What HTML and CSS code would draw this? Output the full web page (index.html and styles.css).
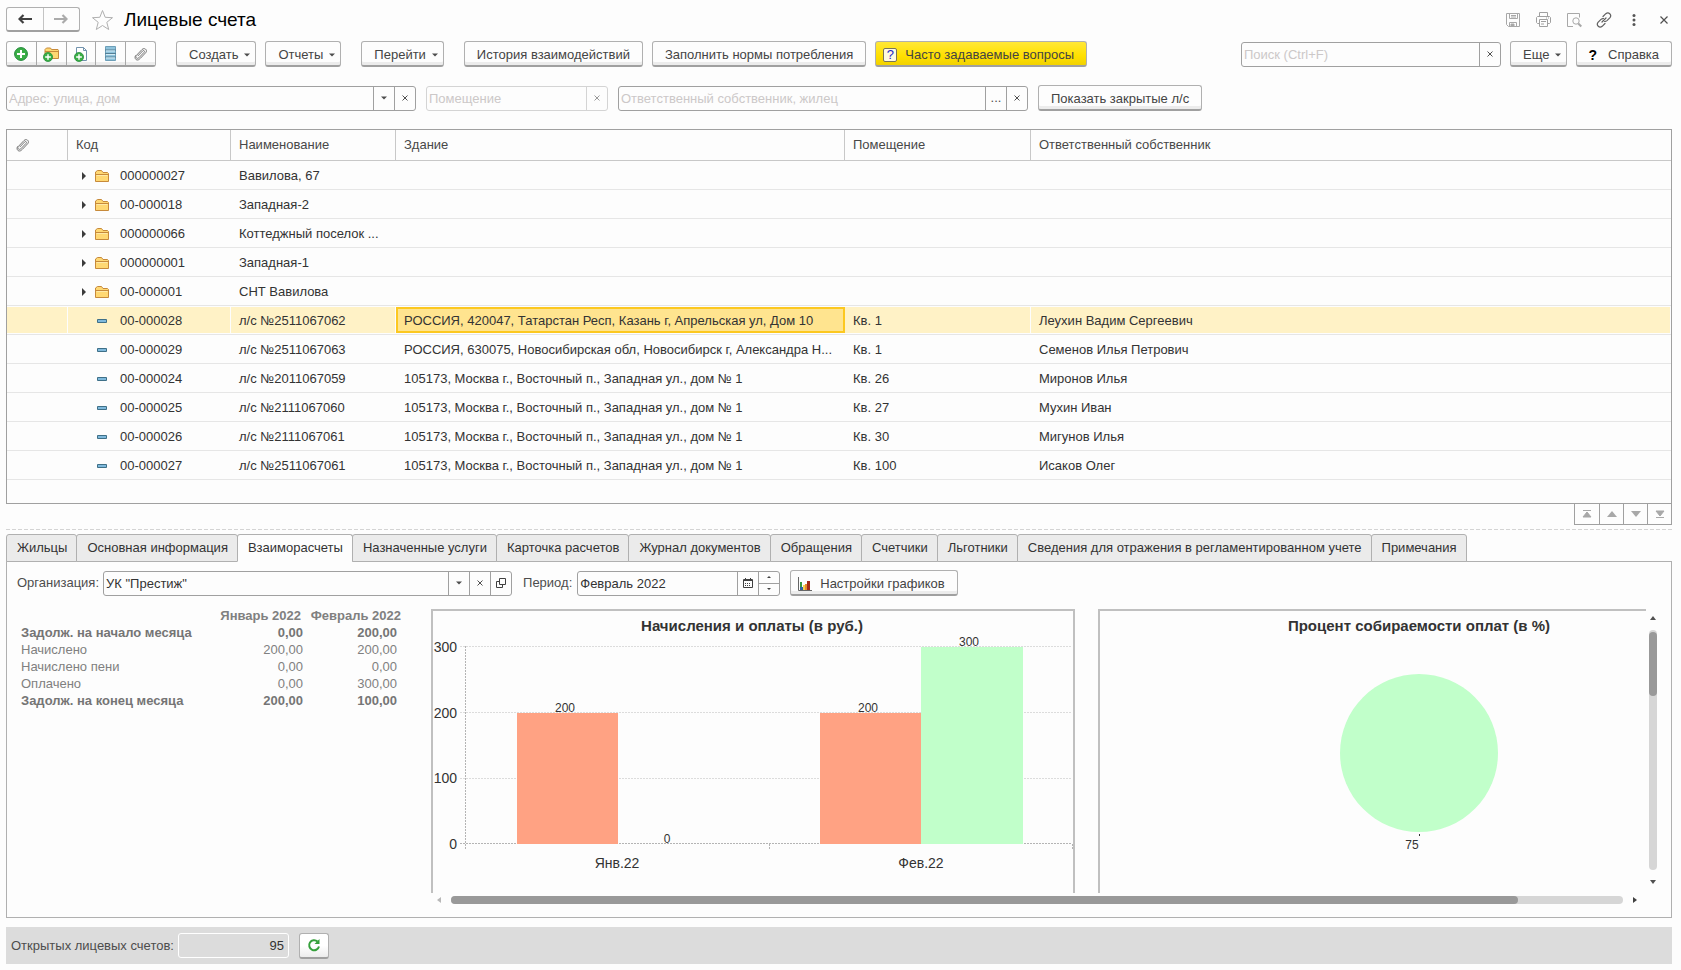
FILE: index.html
```html
<!DOCTYPE html>
<html lang="ru">
<head>
<meta charset="utf-8">
<title>Лицевые счета</title>
<link rel="stylesheet" href="styles.css">
</head>
<body>
<svg class="defs" aria-hidden="true">
  <symbol id="i-folder" viewBox="0 0 16 14"><path d="M1.5 12.5v-9.500l2-1.500h4l1.500 2h4.500l1 1v8z" fill="#ffd873" stroke="#c78a3b"/><path d="M1.500 5.500h13" stroke="#c78a3b"/><path d="M2.500 6.500h11" stroke="#ffeaa8"/></symbol>
  <symbol id="i-item" viewBox="0 0 10 4"><path d="M.5.5h9v3h-9z" fill="#7fb9dc" stroke="#3f7088"/></symbol>
  <symbol id="i-open" viewBox="0 0 4 8"><path d="M0 0v8l4-4z" fill="#3c3c3c"/></symbol>
  <symbol id="i-down" viewBox="0 0 6 4"><path d="M0 .5h6L3 3.500z" fill="#4d4d4d"/></symbol>
  <symbol id="i-x" viewBox="0 0 6 6"><path d="M.5.5l5 5M5.500.5l-5 5" stroke="currentColor"/></symbol>
  <symbol id="i-clip" viewBox="0 0 14 14"><path d="M4 8.800l4.700-4.900c1-1 2.400.2 1.500 1.300l-5.400 5.600c-1.700 1.600-4-.6-2.500-2.300L8 2.500c2.500-2.400 6 .6 3.700 3.200l-5.200 5.500-1.800 1.500c-2.600 1.300-4.800-1.600-3.200-4" fill="none" stroke="#747474" stroke-linecap="round"/></symbol>
  <symbol id="i-plus" viewBox="0 0 14 14"><circle cx="7" cy="7" r="6.400" fill="#3aae46" stroke="#22883a"/><path d="M7 3v8M3 7h8" stroke="#fff" stroke-width="2"/></symbol>
</svg>

<header class="titlebar">
  <div class="group nav">
    <button class="cell" aria-label="Назад"><svg width="14" height="10" viewBox="0 0 14 10"><path d="M14 5H3M5.500 1L1.500 5l4 4" fill="none" stroke="#404040" stroke-width="2.200"/></svg></button>
    <button class="cell" aria-label="Вперед"><svg width="14" height="10" viewBox="0 0 14 10"><path d="M0 5h11M8.500 1l4 4-4 4" fill="none" stroke="#ababab" stroke-width="2.200"/></svg></button>
  </div>
  <button class="plain" aria-label="Избранное"><svg width="23" height="22" viewBox="0 0 23 22"><path d="M11.500 1.500l2.700 6.800 7.300.4-5.700 4.600 1.900 7.200-6.200-4-6.200 4 1.900-7.200L1.500 8.700l7.300-.4z" fill="none" stroke="#b0b0b0"/></svg></button>
  <h1 class="title">Лицевые счета</h1>
  <div class="wintools">
    <button class="plain" aria-label="Сохранить"><svg width="16" height="16" viewBox="0 0 16 16" fill="none" stroke="#a8a8a8"><path d="M1.500 1.500h13v13h-11l-2-2zM4.500 1.500v5h8v-5M6 3.500h5M6 5h5M4.500 14.500v-4h7v4"/><path d="M6 12h3v2H6z" fill="#a8a8a8"/></svg></button>
    <button class="plain" aria-label="Печать"><svg width="17" height="16" viewBox="0 0 17 16" fill="none" stroke="#a0a0a0"><path d="M4.500 4.500v-4h8v4M4.500 11.500h-2l-1-1v-5l1-1h12l1 1v5l-1 1h-2M4.500 7.500h8v7h-8zM6 9.500h5M6 12h3M11 6h1m1 0h1"/></svg></button>
    <button class="plain" aria-label="Просмотр"><svg width="16" height="16" viewBox="0 0 16 16" fill="none" stroke="#a8a8a8"><path d="M7 14.500H1.500v-13h12v4"/><circle cx="10" cy="9" r="3.200"/><path d="M12.300 11.500l3 3" stroke-width="2"/></svg></button>
    <button class="plain" aria-label="Ссылка"><svg width="16" height="16" viewBox="0 0 16 16" fill="none" stroke="#606060" stroke-width="1.200" stroke-linecap="round"><path d="M7 4.500l2.800-2.800c2.800-2.300 6.300 1 4.200 3.900l-3 3c-.9.700-1.600.9-2.500.7M9 11.500l-2.800 2.800c-2.800 2.300-6.300-1-4.200-3.900l3-3c.9-.7 1.600-.9 2.500-.7M6 10l1.500-1.500M8.500 7.500L10 6"/></svg></button>
    <button class="plain" aria-label="Меню"><svg width="16" height="16" viewBox="0 0 16 16" fill="#555"><circle cx="8" cy="3.500" r="1.500"/><circle cx="8" cy="8" r="1.500"/><circle cx="8" cy="12.500" r="1.500"/></svg></button>
    <button class="plain" aria-label="Закрыть"><svg width="16" height="16" viewBox="0 0 16 16"><path d="M4.500 4.500l7 7M11.500 4.500l-7 7" stroke="#505050" stroke-width="1.200"/></svg></button>
  </div>
</header>

<div class="toolbar">
  <div class="group tools">
    <button class="cell" aria-label="Добавить"><svg width="14" height="14"><use href="#i-plus"/></svg></button>
    <button class="cell" aria-label="Создать группу"><svg width="16" height="16" viewBox="0 0 16 16"><path d="M2 12V3.500L3.500 2h4l1 1.500H15l.5 1v8H2z" fill="#ffd873" stroke="#c78a3b"/><path d="M2 5.500h13" stroke="#c78a3b"/><svg y="6" width="10" height="10"><use href="#i-plus"/></svg></svg></button>
    <button class="cell" aria-label="Скопировать"><svg width="14" height="16" viewBox="0 0 14 16"><path d="M2.500 1.500h7l3 3v10h-10z" fill="#fff" stroke="#7393ad"/><path d="M9.500 1.500v3h3" fill="none" stroke="#7393ad"/><svg y="6" width="10" height="10"><use href="#i-plus"/></svg></svg></button>
    <button class="cell" aria-label="Список"><svg width="11" height="15" viewBox="0 0 11 15"><path d="M.5.5h10v14H.5z" fill="#8fc3dc" stroke="#6d9fb8"/><path d="M0 4h11M0 7.500h11M0 11h11" stroke="#557f95"/><path d="M1 5h9M1 8.500h9M1 12h9" stroke="#d4ecf5"/></svg></button>
    <button class="cell" aria-label="Файлы"><svg width="14" height="14"><use href="#i-clip"/></svg></button>
  </div>
  <button class="btn drop gap-l">Создать<svg width="6" height="4"><use href="#i-down"/></svg></button>
  <button class="btn drop">Отчеты<svg width="6" height="4"><use href="#i-down"/></svg></button>
  <button class="btn drop gap-l">Перейти<svg width="6" height="4"><use href="#i-down"/></svg></button>
  <button class="btn gap-l">История взаимодействий</button>
  <button class="btn">Заполнить нормы потребления</button>
  <button class="btn faq"><span class="q">?</span>Часто задаваемые вопросы</button>
  <div class="field search">
    <input type="text" placeholder="Поиск (Ctrl+F)" aria-label="Поиск">
    <button aria-label="Очистить"><svg width="6" height="6"><use href="#i-x"/></svg></button>
  </div>
  <button class="btn drop">Еще<svg width="6" height="4"><use href="#i-down"/></svg></button>
  <button class="btn help"><b>?</b>Справка</button>
</div>

<div class="filters">
  <div class="field wide">
    <input type="text" placeholder="Адрес: улица, дом" aria-label="Адрес">
    <button aria-label="Выбрать"><svg width="6" height="4"><use href="#i-down"/></svg></button>
    <button aria-label="Очистить"><svg width="6" height="6"><use href="#i-x"/></svg></button>
  </div>
  <div class="field room">
    <input type="text" placeholder="Помещение" aria-label="Помещение">
    <button aria-label="Очистить"><svg width="6" height="6"><use href="#i-x"/></svg></button>
  </div>
  <div class="field wide">
    <input type="text" placeholder="Ответственный собственник, жилец" aria-label="Ответственный собственник, жилец">
    <button>...</button>
    <button aria-label="Очистить"><svg width="6" height="6"><use href="#i-x"/></svg></button>
  </div>
  <button class="btn">Показать закрытые л/с</button>
</div>

<div class="grid-frame">
<table class="grid">
  <colgroup><col class="c-clip"><col class="c-code"><col class="c-name"><col class="c-house"><col class="c-room"><col></colgroup>
  <thead><tr><th class="clip" aria-label="Файлы"><svg width="14" height="14"><use href="#i-clip"/></svg></th><th>Код</th><th>Наименование</th><th>Здание</th><th>Помещение</th><th>Ответственный собственник</th></tr></thead>
  <tbody>
    <tr><td></td><td><span class="code"><svg class="open"><use href="#i-open"/></svg><svg class="folder"><use href="#i-folder"/></svg>000000027</span></td><td>Вавилова, 67</td><td></td><td></td><td></td></tr>
    <tr><td></td><td><span class="code"><svg class="open"><use href="#i-open"/></svg><svg class="folder"><use href="#i-folder"/></svg>00-000018</span></td><td>Западная-2</td><td></td><td></td><td></td></tr>
    <tr><td></td><td><span class="code"><svg class="open"><use href="#i-open"/></svg><svg class="folder"><use href="#i-folder"/></svg>000000066</span></td><td>Коттеджный поселок ...</td><td></td><td></td><td></td></tr>
    <tr><td></td><td><span class="code"><svg class="open"><use href="#i-open"/></svg><svg class="folder"><use href="#i-folder"/></svg>000000001</span></td><td>Западная-1</td><td></td><td></td><td></td></tr>
    <tr><td></td><td><span class="code"><svg class="open"><use href="#i-open"/></svg><svg class="folder"><use href="#i-folder"/></svg>00-000001</span></td><td>СНТ Вавилова</td><td></td><td></td><td></td></tr>
    <tr class="selected"><td></td><td><span class="code leaf"><svg class="item"><use href="#i-item"/></svg>00-000028</span></td><td>л/с №2511067062</td><td class="current">РОССИЯ, 420047, Татарстан Респ, Казань г, Апрельская ул, Дом 10</td><td>Кв. 1</td><td>Леухин Вадим Сергеевич</td></tr>
    <tr><td></td><td><span class="code leaf"><svg class="item"><use href="#i-item"/></svg>00-000029</span></td><td>л/с №2511067063</td><td>РОССИЯ, 630075, Новосибирская обл, Новосибирск г, Александра Н...</td><td>Кв. 1</td><td>Семенов Илья Петрович</td></tr>
    <tr><td></td><td><span class="code leaf"><svg class="item"><use href="#i-item"/></svg>00-000024</span></td><td>л/с №2011067059</td><td>105173, Москва г., Восточный п., Западная ул., дом № 1</td><td>Кв. 26</td><td>Миронов Илья</td></tr>
    <tr><td></td><td><span class="code leaf"><svg class="item"><use href="#i-item"/></svg>00-000025</span></td><td>л/с №2111067060</td><td>105173, Москва г., Восточный п., Западная ул., дом № 1</td><td>Кв. 27</td><td>Мухин Иван</td></tr>
    <tr><td></td><td><span class="code leaf"><svg class="item"><use href="#i-item"/></svg>00-000026</span></td><td>л/с №2111067061</td><td>105173, Москва г., Восточный п., Западная ул., дом № 1</td><td>Кв. 30</td><td>Мигунов Илья</td></tr>
    <tr><td></td><td><span class="code leaf"><svg class="item"><use href="#i-item"/></svg>00-000027</span></td><td>л/с №2511067061</td><td>105173, Москва г., Восточный п., Западная ул., дом № 1</td><td>Кв. 100</td><td>Исаков Олег</td></tr>
  </tbody>
</table>
</div>
<div class="pager">
  <button aria-label="В начало"><svg width="10" height="8" viewBox="0 0 10 8"><path d="M1 .5h8M1 7l4-5 4 5z" fill="#a8a8a8" stroke="#a8a8a8"/></svg></button>
  <button aria-label="Вверх"><svg width="10" height="6" viewBox="0 0 10 6"><path d="M0 6l5-6 5 6z" fill="#a8a8a8"/></svg></button>
  <button aria-label="Вниз"><svg width="10" height="6" viewBox="0 0 10 6"><path d="M0 0l5 6 5-6z" fill="#a8a8a8"/></svg></button>
  <button aria-label="В конец"><svg width="10" height="8" viewBox="0 0 10 8"><path d="M1 7.500h8M1 1l4 5 4-5z" fill="#a8a8a8" stroke="#a8a8a8"/></svg></button>
</div>
<div class="splitter"></div>

<nav class="tabs" role="tablist">
  <button role="tab">Жильцы</button><button role="tab">Основная информация</button><button role="tab" aria-selected="true" class="active">Взаиморасчеты</button><button role="tab">Назначенные услуги</button><button role="tab">Карточка расчетов</button><button role="tab">Журнал документов</button><button role="tab">Обращения</button><button role="tab">Счетчики</button><button role="tab">Льготники</button><button role="tab">Сведения для отражения в регламентированном учете</button><button role="tab">Примечания</button>
</nav>
<section class="panel">
  <div class="params">
    <label for="org">Организация:</label>
    <div class="field org">
      <input id="org" type="text" value='УК "Престиж"'>
      <button aria-label="Выбрать"><svg width="6" height="4"><use href="#i-down"/></svg></button>
      <button aria-label="Очистить"><svg width="6" height="6"><use href="#i-x"/></svg></button>
      <button aria-label="Открыть"><svg width="10" height="10" viewBox="0 0 10 10"><path d="M3.500.5h6v6h-6zM3.500 3.500h-3v6h6v-3" fill="none" stroke="#404040"/></svg></button>
    </div>
    <label for="period">Период:</label>
    <div class="field period">
      <input id="period" type="text" value="Февраль 2022">
      <button aria-label="Календарь"><svg width="10" height="10" viewBox="0 0 10 10"><path d="M.5 1.500h9v8h-9z" fill="none" stroke="#404040"/><path d="M1 2.500h8M2.500 0v2M7.500 0v2" stroke="#404040"/><path d="M2 5.500h6M2 7.500h6" stroke="#404040" stroke-dasharray="1 1"/></svg></button>
      <div class="spin"><button aria-label="Больше"><svg width="4" height="2" viewBox="0 0 4 2"><path d="M0 2l2-2 2 2z" fill="#404040"/></svg></button><button aria-label="Меньше"><svg width="4" height="2" viewBox="0 0 4 2"><path d="M0 0l2 2 2-2z" fill="#404040"/></svg></button></div>
    </div>
    <button class="btn settings"><svg width="14" height="14" viewBox="0 0 14 14"><path d="M.5 0v13.500H14" fill="none" stroke="#666"/><path d="M2 5h2v5H2z" fill="#35963c"/><path d="M2 10h3v3H2z" fill="#2b62a3"/><path d="M5 8h2v5H5z" fill="#f5cf4b"/><path d="M7 7h2v6H7z" fill="#e38a2c"/><path d="M9 4h3v9H9z" fill="#a32b16"/></svg>Настройки графиков</button>
  </div>
  <div class="report">
    <table class="sums">
      <thead><tr><th></th><th>Январь 2022</th><th>Февраль 2022</th></tr></thead>
      <tbody>
        <tr class="total"><td>Задолж. на начало месяца</td><td>0,00</td><td>200,00</td></tr>
        <tr><td>Начислено</td><td>200,00</td><td>200,00</td></tr>
        <tr><td>Начислено пени</td><td>0,00</td><td>0,00</td></tr>
        <tr><td>Оплачено</td><td>0,00</td><td>300,00</td></tr>
        <tr class="total"><td>Задолж. на конец месяца</td><td>200,00</td><td>100,00</td></tr>
      </tbody>
    </table>
    <div class="charts">
      <div class="views">
        <figure class="chart bars">
          <svg width="640" height="282" viewBox="0 0 640 282">
            <text class="ct" x="319" y="20">Начисления и оплаты (в руб.)</text>
            <g class="rule"><path d="M27 35.500h612M27 101.500h612M27 167.500h612"/></g>
            <g class="axis"><path d="M32.500 35v204M27 232.500h612M336.500 233v6M639.500 233v6"/></g>
            <path d="M84 102h101v131H84zM387 102h101v131H387z" fill="#ffa283"/>
            <path d="M488 36h102v197H488z" fill="#c1ffca"/>
            <g class="ax"><text x="24" y="41">300</text><text x="24" y="107">200</text><text x="24" y="172">100</text><text x="24" y="238">0</text></g>
            <g class="val"><text x="132" y="101">200</text><text x="234" y="232">0</text><text x="435" y="101">200</text><text x="536" y="35">300</text></g>
            <g class="cat"><text x="184" y="257">Янв.22</text><text x="488" y="257">Фев.22</text></g>
          </svg>
        </figure>
        <figure class="chart pie">
          <svg width="640" height="282" viewBox="0 0 640 282">
            <text class="ct" x="319" y="20">Процент собираемости оплат (в %)</text>
            <circle cx="319" cy="142" r="79" fill="#c1ffca"/>
            <path d="M319.500 223v2" stroke="#333"/>
            <g class="val"><text x="312" y="238">75</text></g>
          </svg>
        </figure>
      </div>
      <div class="vbar"><svg width="6" height="4" viewBox="0 0 6 4"><path d="M0 4l3-4 3 4z" fill="#505050"/></svg><div class="track"><div class="thumb"></div></div><svg width="6" height="4" viewBox="0 0 6 4"><path d="M0 0l3 4 3-4z" fill="#505050"/></svg></div>
      <div class="hbar"><svg width="4" height="6" viewBox="0 0 4 6"><path d="M4 0L0 3l4 3z" fill="#b8b8b8"/></svg><div class="track"><div class="thumb"></div></div><svg width="4" height="6" viewBox="0 0 4 6"><path d="M0 0l4 3-4 3z" fill="#404040"/></svg></div>
    </div>
  </div>
</section>

<footer class="status">
  <label for="open">Открытых лицевых счетов:</label>
  <input id="open" type="text" value="95" readonly>
  <button class="btn refresh" aria-label="Обновить"><svg width="14" height="14" viewBox="0 0 14 14"><path d="M10.500 3.500A5 5 0 1 0 12 8.500" fill="none" stroke="#35a03b" stroke-width="2"/><path d="M12.500 1v5h-5z" fill="#35a03b"/></svg></button>
</footer>
</body>
</html>
```
FILE: styles.css
```css
* { box-sizing: border-box; }
body {
  margin: 0;
  padding: 7px 9px 6px 6px;
  min-height: 100vh;
  display: flex;
  flex-direction: column;
  background: #fdfdfd;
  color: #333;
  font: 13px/16px "Liberation Sans", Arial, sans-serif;
}
button, input { font: inherit; color: inherit; margin: 0; }
button { padding: 0; border: 0; background: none; display: flex; align-items: center; justify-content: center; white-space: nowrap; }
svg { display: block; flex: none; }
.defs { position: absolute; width: 0; height: 0; }

.titlebar { display: flex; align-items: center; height: 25px; }
.title { margin: 0 0 0 10px; font-size: 19px; line-height: 24px; font-weight: normal; color: #000; }
.titlebar > .plain { margin-left: 11px; }
.wintools { margin-left: auto; display: flex; gap: 14px; }

.group { display: flex; border: 1px solid #b0b0b0; border-bottom: 2px solid #a0a0a0; border-radius: 3px; }
.cell { flex: 1; border-left: 1px solid #c4c4c4; }
.cell:first-child { border-left: 0; }
.nav { width: 74px; height: 25px; }
.tools { width: 150px; height: 26px; }
.tools .cell { border-color: #a8a8a8; box-shadow: inset 0 -3px #ececec; }

.toolbar, .filters { display: flex; align-items: center; gap: 9px; }
.toolbar { margin-top: 9px; }
.filters { margin-top: 18px; gap: 10px; }
.btn {
  height: 26px;
  padding: 2px 12px 0;
  border: 1px solid #b0b0b0;
  border-bottom: 2px solid #a0a0a0;
  border-radius: 3px;
  color: #444;
  box-shadow: inset 0 -3px #ececec;
}
.gap-l { margin-left: 11px; }
.drop { gap: 6px; padding-right: 5px; }
.faq { gap: 8px; padding-left: 7px; background: linear-gradient(#ffe838, #ffe000 60%, #f2d200); box-shadow: none; }
.q { width: 14px; height: 14px; border: 1px solid #77735a; border-radius: 2px; background: #fffbe0; color: #2424c4; line-height: 12px; }
.help { gap: 11px; padding-left: 11px; }
.help b { color: #000; font-size: 14px; }

.field { display: flex; height: 25px; border: 1px solid #a0a0a0; border-radius: 3px; color: #333; }
.field input { flex: 1; min-width: 0; border: 0; outline: 0; padding: 1px 2px 0; background: none; }
.field input::placeholder { color: #ccc8c8; opacity: 1; }
.field > button { width: 21px; border-left: 1px solid #a0a0a0; color: #505050; }
.search { width: 260px; margin-left: auto; }
.wide { width: 410px; }
.room { width: 182px; border-color: #d4d4d4; }
.room > button { border-color: #d4d4d4; color: #999; }

.grid-frame { flex: 1; margin-top: 18px; min-height: 375px; border: 1px solid #a0a0a0; }
.grid { width: 100%; table-layout: fixed; border-spacing: 0; }
.c-clip { width: 61px; }
.c-code { width: 163px; }
.c-name { width: 165px; }
.c-house { width: 449px; }
.c-room { width: 186px; }
.grid th, .grid td { padding: 1px 0 0 8px; text-align: left; white-space: nowrap; overflow: hidden; }
.grid th { height: 31px; padding-top: 0; font-weight: normal; color: #484848; border-bottom: 1px solid #c8c8c8; border-right: 1px solid #c8c8c8; }
.grid th:last-child { border-right: 0; }
.grid td { height: 29px; border-bottom: 1px solid #e6e6e6; }
.grid th.clip { padding-left: 9px; }
.code { display: flex; align-items: center; padding-left: 6px; }
.open { width: 4px; height: 8px; margin-right: 8px; }
.folder { width: 16px; height: 14px; margin-right: 10px; }
.leaf { padding-left: 21px; }
.item { width: 10px; height: 4px; margin-right: 13px; }
.selected td { background: #fff2c6; box-shadow: inset 0 1px #fdfdfd, inset 0 -1px #fdfdfd, inset -1px 0 #fdfdfd; }
.selected td.current {
  background: #ffe48f;
  box-shadow: inset 0 1px #fdfdfd, inset 0 -1px #fdfdfd, inset 0 3px #fcc820, inset 0 -3px #fcc820, inset 2px 0 #fcc820, inset -2px 0 #fcc820;
}

.pager { display: flex; align-self: flex-end; height: 21px; border: 1px solid #a0a0a0; border-top: 0; }
.pager button { width: 24px; border-left: 1px solid #a0a0a0; }
.pager button:first-child { border-left: 0; }
.splitter { margin-top: 4px; height: 1px; background: repeating-linear-gradient(90deg, #d4d4d4 0 4px, transparent 4px 6px); }

.tabs { display: flex; margin-top: 4px; height: 28px; position: relative; }
.tabs button { margin-right: -1px; padding: 0 9px 0 10px; border: 1px solid #b0b0b0; border-radius: 3px 3px 0 0; background: #ebebeb; }
.tabs .active { background: #fdfdfd; border-bottom-color: #fdfdfd; }
.panel { margin-top: -1px; border: 1px solid #b0b0b0; padding: 8px 13px 12px 10px; }
.params { display: flex; align-items: center; }
.params label { color: #4d4d4d; }
.org { width: 409px; margin: 0 11px 0 4px; }
.period { width: 203px; margin: 0 10px 0 5px; }
.spin { display: flex; flex-direction: column; width: 21px; border-left: 1px solid #a0a0a0; }
.spin button { flex: 1; }
.spin button + button { border-top: 1px solid #a0a0a0; }
.settings { gap: 8px; padding-left: 7px; }

.report { display: flex; margin-top: 13px; }
.sums { width: 384px; margin: -2px 30px 0 0; align-self: flex-start; table-layout: fixed; border-spacing: 0; color: #808080; }
.sums th, .sums td { height: 17px; padding: 0 4px 0 0; text-align: right; white-space: nowrap; line-height: 17px; }
.sums th { padding: 0; }
.sums tr > :first-child { width: 196px; padding-left: 4px; text-align: left; }
.sums tr > :nth-child(2) { width: 94px; }
.sums th:nth-child(2) { padding-right: 6px; }
.total { font-weight: bold; color: #757575; }
.charts { flex: 1; min-width: 0; display: grid; grid-template-columns: minmax(0, 1fr) 12px; row-gap: 2px; }
.views { display: flex; gap: 23px; overflow: hidden; }
.chart { flex: none; margin: 0; border: 2px solid #c0c0c0; border-bottom: 0; }
.chart text { font-family: "Liberation Sans", Arial, sans-serif; fill: #333; text-anchor: middle; font-size: 14px; }
.chart .ct { font-weight: bold; font-size: 15px; }
.chart .ax text { text-anchor: end; }
.chart .val text { font-size: 12px; }
.rule path { stroke: #dcdcdc; stroke-dasharray: 2 1; }
.axis path { fill: none; stroke: #b4b4b4; stroke-dasharray: 2 1; }
.vbar { display: flex; flex-direction: column; align-items: center; gap: 10px; padding: 7px 0 9px 2px; }
.vbar .track { flex: 1; width: 8px; padding-top: 2px; border-radius: 4px; background: #d6d6d6; }
.vbar .thumb { height: 64px; border-radius: 4px; background: #999; }
.hbar { grid-column: 1; display: flex; align-items: center; gap: 10px; height: 10px; padding: 0 9px 0 6px; }
.hbar .track { flex: 1; height: 8px; border-radius: 4px; background: #d6d6d6; }
.hbar .thumb { width: 91%; height: 8px; border-radius: 4px; background: #999; }

.status { display: flex; align-items: center; margin-top: 9px; padding: 5px; height: 37px; background: #dcdcdc; color: #4d4d4d; }
.status input { width: 111px; height: 25px; margin: 0 10px 0 4px; padding: 0 4px; border: 1px solid #fff; border-radius: 3px; background: none; text-align: right; color: #333; outline: 0; }
.refresh { width: 30px; padding: 0; background: linear-gradient(#fff 50%, #ececec); box-shadow: none; }
```
